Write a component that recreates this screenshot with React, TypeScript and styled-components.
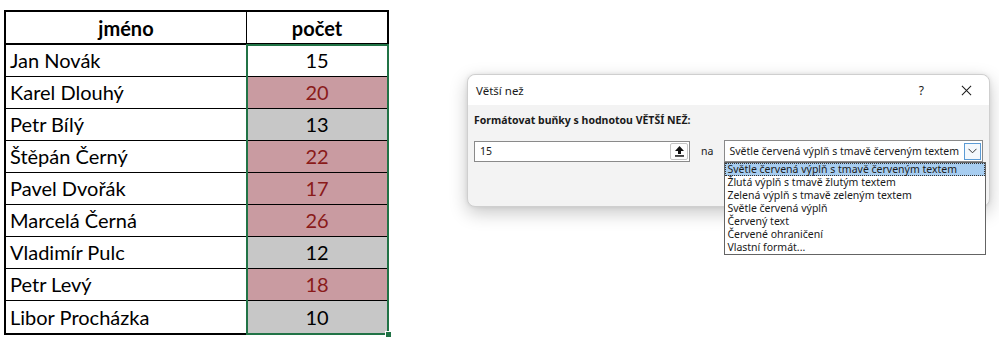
import React from 'react';
import styled, { createGlobalStyle } from 'styled-components';

type Tone = 'none' | 'red' | 'gray';

const rows: { name: string; count: number; tone: Tone }[] = [
  { name: 'Jan Novák', count: 15, tone: 'none' },
  { name: 'Karel Dlouhý', count: 20, tone: 'red' },
  { name: 'Petr Bílý', count: 13, tone: 'gray' },
  { name: 'Štěpán Černý', count: 22, tone: 'red' },
  { name: 'Pavel Dvořák', count: 17, tone: 'red' },
  { name: 'Marcelá Černá', count: 26, tone: 'red' },
  { name: 'Vladimír Pulc', count: 12, tone: 'gray' },
  { name: 'Petr Levý', count: 18, tone: 'red' },
  { name: 'Libor Procházka', count: 10, tone: 'gray' },
];

const options = [
  'Světle červená výplň s tmavě červeným textem',
  'Žlutá výplň s tmavě žlutým textem',
  'Zelená výplň s tmavě zeleným textem',
  'Světle červená výplň',
  'Červený text',
  'Červené ohraničení',
  'Vlastní formát...',
];

const App = () => {
  return (
    <Page>
      <GlobalStyle />
      <Sheet>
        <NameCol>
          <HeadCell>jméno</HeadCell>
          {rows.map((r, i) => (
            <NameCell key={r.name} $last={i === rows.length - 1}>
              {r.name}
            </NameCell>
          ))}
        </NameCol>
        <CountCol>
          <HeadCell>počet</HeadCell>
          {rows.map((r, i) => (
            <CountCell key={r.name} $tone={r.tone} $last={i === rows.length - 1}>
              {r.count}
            </CountCell>
          ))}
          <Selection>
            <FillHandle />
          </Selection>
        </CountCol>
      </Sheet>

      <Dialog>
        <TitleBar>
          <Title>Větší než</Title>
          <TitleButtons>
            <span>?</span>
            <CloseIcon viewBox="0 0 12 12">
              <path d="M1 1 L11 11 M11 1 L1 11" stroke="#1a1a1a" strokeWidth="1.1" fill="none" />
            </CloseIcon>
          </TitleButtons>
        </TitleBar>
        <Body>
          <Label>Formátovat buňky s hodnotou VĚTŠÍ NEŽ:</Label>
          <FieldRow>
            <ValueInput>
              15
              <RefButton>
                <svg width="11" height="12" viewBox="0 0 11 12">
                  <path d="M5.5 1 L10 6 L7 6 L7 9 L4 9 L4 6 L1 6 Z" fill="#111" />
                  <rect x="1" y="10.2" width="9" height="1.5" fill="#111" />
                </svg>
              </RefButton>
            </ValueInput>
            <Na>na</Na>
            <SelectWrap>
              <SelectBox>
                <SelectText>{options[0]}</SelectText>
                <DropButton>
                  <svg width="9" height="6" viewBox="0 0 9 6">
                    <path d="M0.5 0.8 L4.5 4.8 L8.5 0.8" stroke="#333" strokeWidth="1" fill="none" />
                  </svg>
                </DropButton>
              </SelectBox>
              <OptionList>
                {options.map((o, i) => (
                  <OptionItem key={o} $active={i === 0}>
                    {o}
                  </OptionItem>
                ))}
              </OptionList>
            </SelectWrap>
          </FieldRow>
        </Body>
      </Dialog>
    </Page>
  );
};

export default App;

const GlobalStyle = createGlobalStyle`
  html, body {
    margin: 0;
    padding: 0;
    background: #ffffff;
  }
  * {
    box-sizing: border-box;
  }
`;

const Page = styled.div`
  display: flex;
  align-items: flex-start;
  width: 999px;
  height: 350px;
  overflow: hidden;
  background: #ffffff;
`;

const Sheet = styled.div`
  display: flex;
  margin: 10px 0 0 4px;
  border: 2px solid #000;
  font-family: Lato, 'Liberation Sans', sans-serif;
  font-size: 20px;
  color: #000;
`;

const NameCol = styled.div`
  display: flex;
  flex-direction: column;
  width: 241px;
  border-right: 1px solid #000;
`;

const CountCol = styled.div`
  position: relative;
  display: flex;
  flex-direction: column;
  width: 140px;
`;

const HeadCell = styled.div`
  height: 33px;
  display: flex;
  align-items: center;
  justify-content: center;
  font-weight: 700;
  border-bottom: 2px solid #000;
`;

const NameCell = styled.div<{ $last?: boolean }>`
  height: 32px;
  display: flex;
  align-items: center;
  padding: 0 0 1px 4px;
  border-bottom: ${(p) => (p.$last ? 'none' : '1px solid #000')};
`;

const toneBg: Record<Tone, string> = {
  none: '#ffffff',
  red: '#c99ba1',
  gray: '#c7c7c7',
};

const CountCell = styled.div<{ $tone: Tone; $last?: boolean }>`
  height: 32px;
  display: flex;
  align-items: center;
  justify-content: center;
  padding-bottom: 1px;
  background: ${(p) => toneBg[p.$tone]};
  color: ${(p) => (p.$tone === 'red' ? '#8a1a1a' : '#000')};
  border-bottom: ${(p) => (p.$last ? 'none' : '1px solid #000')};
`;

const Selection = styled.div`
  position: absolute;
  top: 32px;
  left: -1px;
  right: -2px;
  bottom: -2px;
  border: 2px solid #217346;
  pointer-events: none;
`;

const FillHandle = styled.div`
  position: absolute;
  right: -4px;
  bottom: -4px;
  width: 5px;
  height: 5px;
  background: #217346;
  outline: 1px solid #fff;
`;

const Dialog = styled.div`
  position: relative;
  margin: 74px 0 0 78px;
  width: 523px;
  height: 133px;
  border: 1px solid #cfcfcf;
  border-radius: 8px;
  background: #f3f3f3;
  box-shadow: 0 6px 18px rgba(0, 0, 0, 0.22), 0 0 4px rgba(0, 0, 0, 0.08);
  font-family: 'Noto Sans', 'Open Sans', sans-serif;
  font-size: 10.5px;
  color: #1a1a1a;
`;

const TitleBar = styled.div`
  display: flex;
  align-items: center;
  justify-content: space-between;
  height: 30px;
  padding: 0 17px 0 8px;
  background: #ffffff;
  border-radius: 8px 8px 0 0;
`;

const Title = styled.span`
  font-size: 11.5px;
`;

const TitleButtons = styled.div`
  display: flex;
  align-items: center;
  gap: 37px;
  font-size: 12px;
`;

const CloseIcon = styled.svg`
  width: 11px;
  height: 11px;
`;

const Body = styled.div`
  display: flex;
  flex-direction: column;
  padding: 8px 0 0 6px;
`;

const Label = styled.div`
  font-weight: 700;
  font-size: 10.5px;
  height: 16px;
`;

const FieldRow = styled.div`
  display: flex;
  align-items: center;
  margin-top: 11px;
`;

const ValueInput = styled.div`
  display: flex;
  align-items: center;
  justify-content: space-between;
  width: 216px;
  height: 21px;
  padding: 0 1px 0 5px;
  background: #fff;
  border: 1px solid #8a8a8a;
`;

const RefButton = styled.div`
  display: flex;
  align-items: center;
  justify-content: center;
  width: 18px;
  height: 17px;
  border: 1px solid #c4c4c4;
  border-radius: 2px;
  background: #fdfdfd;
`;

const Na = styled.span`
  margin: 0 11px 0 11px;
`;

const SelectWrap = styled.div`
  position: relative;
`;

const SelectBox = styled.div`
  display: flex;
  align-items: center;
  justify-content: space-between;
  width: 259px;
  height: 22px;
  padding: 0 1px 0 4px;
  background: #fff;
  border: 1px solid #8a8a8a;
`;

const SelectText = styled.span`
  white-space: nowrap;
  overflow: hidden;
`;

const DropButton = styled.div`
  flex: none;
  display: flex;
  align-items: center;
  justify-content: center;
  width: 17px;
  height: 17px;
  border: 1px solid #5b9bd5;
  background: #f4f8fc;
`;

const OptionList = styled.div`
  position: absolute;
  top: 22px;
  left: 0;
  width: 262px;
  background: #fff;
  border: 1px solid #646464;
  z-index: 2;
`;

const OptionItem = styled.div<{ $active?: boolean }>`
  height: 13px;
  line-height: 13px;
  padding-left: 2px;
  white-space: nowrap;
  background: ${(p) => (p.$active ? '#a7cdf0' : 'transparent')};
  outline: ${(p) => (p.$active ? '1px dotted #333' : 'none')};
  outline-offset: -1px;
`;
